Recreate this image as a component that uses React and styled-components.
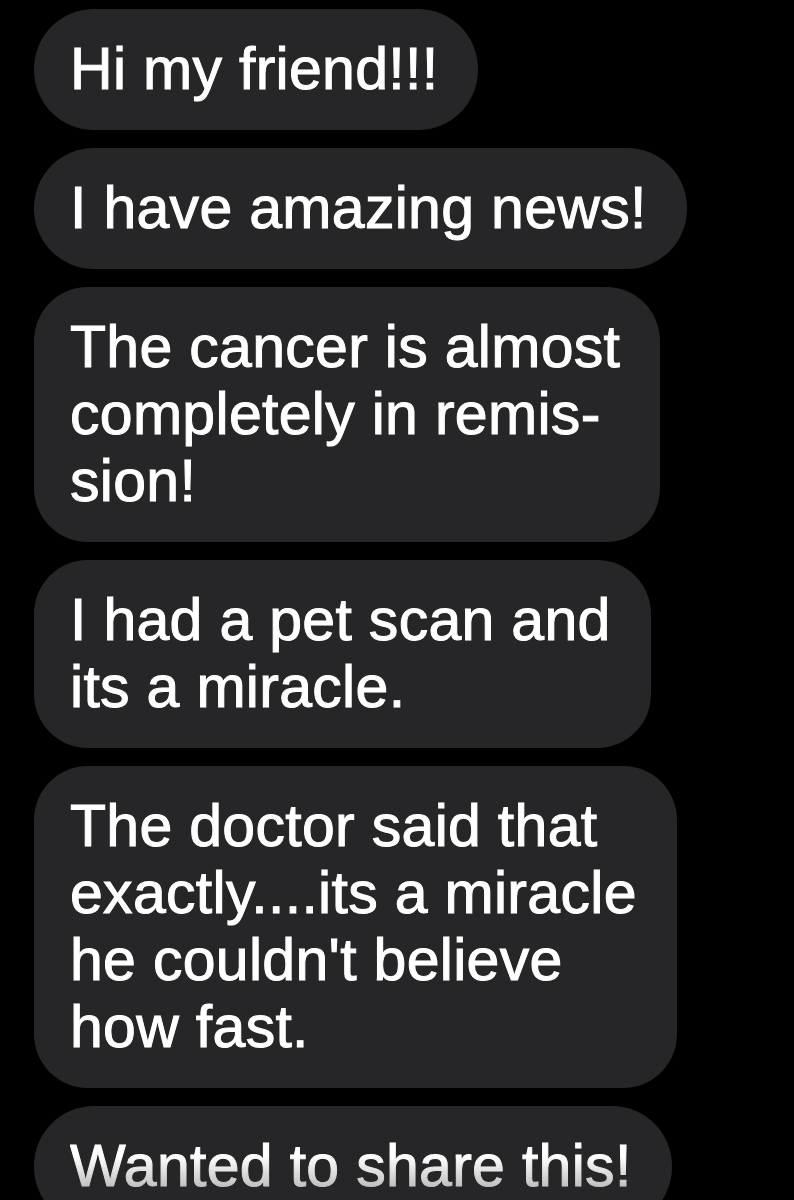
import React from 'react';
import styled, { createGlobalStyle } from 'styled-components';

const messages = [
  { lines: ['Hi my friend!!!'] },
  { lines: ['I have amazing news!'] },
  { lines: ['The cancer is almost', 'completely in remis-', 'sion!'] },
  { lines: ['I had a pet scan and', 'its a miracle.'] },
  { lines: ['The doctor said that', 'exactly....its a miracle', "he couldn't believe", 'how fast.'] },
  { lines: ['Wanted to share this!'], faded: true },
];

const App = () => (
  <>
    <GlobalStyle />
    <Thread>
      {messages.map((msg, i) => (
        <Bubble key={i} single={msg.lines.length === 1}>
          <Text faded={msg.faded}>
            {msg.lines.map((line, j) => (
              <Line key={j}>{line}</Line>
            ))}
          </Text>
        </Bubble>
      ))}
    </Thread>
  </>
);

export default App;

const GlobalStyle = createGlobalStyle`
  html, body {
    margin: 0;
    padding: 0;
    background: #000000;
    height: 100%;
    overflow: hidden;
  }
`;

const Thread = styled.div`
  display: flex;
  flex-direction: column;
  align-items: flex-start;
  gap: 18px;
  padding: 9px 0 0 34px;
  height: 1200px;
  box-sizing: border-box;
  background: #000000;
`;

const Bubble = styled.div`
  background: #262628;
  border-radius: ${p => (p.single ? '60px' : '54px')};
  padding: 27px 40px 27px 36px;
  flex-shrink: 0;
`;

const Text = styled.div`
  font-family: 'Liberation Sans', Arial, sans-serif;
  font-size: 59px;
  line-height: 67px;
  color: #ffffff;
  -webkit-text-stroke: 1px #ffffff;
  letter-spacing: 0.3px;
  white-space: nowrap;
  ${p => p.faded && `
    -webkit-mask-image: linear-gradient(180deg, #000 35%, rgba(0, 0, 0, 0.62) 95%);
    mask-image: linear-gradient(180deg, #000 35%, rgba(0, 0, 0, 0.62) 95%);
  `}
`;

const Line = styled.div`
  display: block;
`;
